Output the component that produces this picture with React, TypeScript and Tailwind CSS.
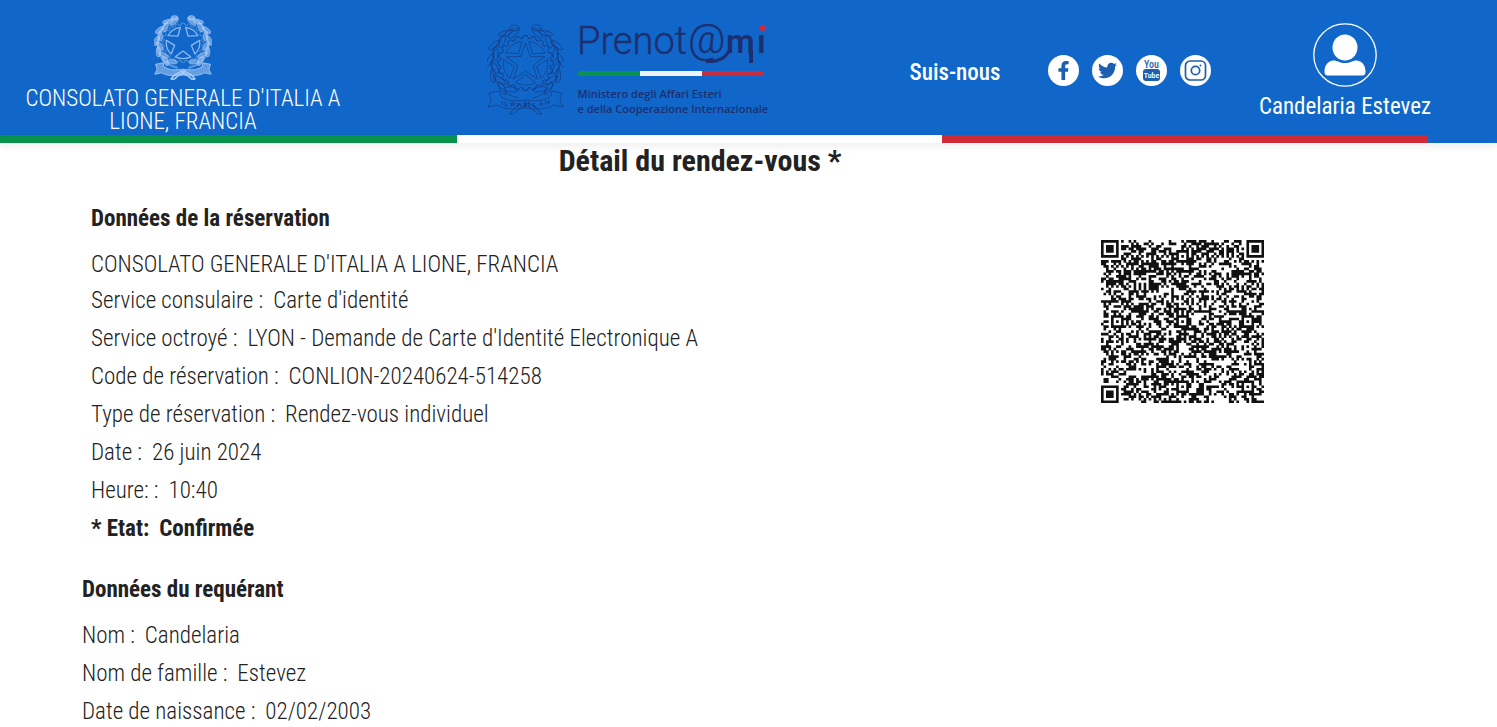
import { FaFacebookF, FaTwitter } from "react-icons/fa";

function polar(r: number, deg: number, cx = 38, cy = 39) {
  const a = (deg * Math.PI) / 180;
  return `${(cx + r * Math.cos(a)).toFixed(2)} ${(cy + r * Math.sin(a)).toFixed(2)}`;
}

const tips = [-90, -18, 54, 126, 198];
const starPoints = tips.map((t) => `${polar(20, t)} ${polar(8, t + 36)}`).join(" ");
const wedges = tips.map(
  (t) => `M${polar(22, t + 9)}A22 22 0 0 1 ${polar(22, t + 63)}L${polar(11.5, t + 36)}Z`
);
const gear =
  Array.from({ length: 20 }, (_, i) => {
    const a = i * 18 - 4;
    return `${i === 0 ? "M" : "L"}${polar(27.5, a)}L${polar(27.5, a + 8)}L${polar(25, a + 10)}L${polar(25, a + 16)}`;
  }).join("") + "Z";
const leafAngles = [118, 131, 144, 157, 170, 183, 196, 209, 222, 235, 248];

function Emblem({ light = false, className }: { light?: boolean; className: string }) {
  const line = light ? "#a9cbf5" : "#16377f";
  const leaf = light ? "#b7d3f7" : "none";
  return (
    <svg viewBox="0 0 76 91" preserveAspectRatio="none" className={className} fill="none" stroke={line} strokeWidth={light ? 1.1 : 0.65} strokeLinejoin="round" aria-hidden="true">
      <path d={gear} strokeOpacity={light ? 0.5 : 1} strokeWidth={light ? 1 : 0.9} />
      {wedges.map((d) => (
        <path key={d} d={d} strokeWidth={light ? 1.8 : 0.65} strokeOpacity={light ? 0.8 : 1} />
      ))}
      {!light && <polygon points={starPoints} />}
      {[1, -1].map((side) => (
        <g key={side} transform={side === -1 ? "translate(76 0) scale(-1 1)" : undefined}>
          <path d="M31 74C10 69 2 52 6 33C8 20 15 9 26 4" strokeWidth={light ? 3 : 0.65} strokeOpacity={light ? 0.5 : 1} />
          {leafAngles.map((a, i) => {
            const [x, y] = polar(31 + (i % 2) * 4, a, 38, 38).split(" ").map(Number);
            return (
              <ellipse key={a} cx={x} cy={y} rx="7" ry={light ? 3 : 2.4} fill={leaf} fillOpacity="0.5" strokeOpacity={light ? 0.6 : 1} transform={`rotate(${a + 90 + (i % 2 ? 22 : -20)} ${x} ${y})`} />
            );
          })}
          <ellipse cx="27" cy="4" rx="4.5" ry="3" fill={leaf} fillOpacity="0.5" />
          <path d="M2 69L12 67L13 72C20 78 29 77 38 76V84C27 86 16 85 10 81L1 83L4 76Z" fill={leaf} fillOpacity="0.5" />
          <path d="M22 90L27 84L34 80M26 90L33 84L42 78M22 90H26" strokeWidth={light ? 2.2 : 0.65} />
        </g>
      ))}
      {!light && (
        <path d="M15 77v4M18 78v4l3-1M24 78.500v4M24 79h3v2h-3M30 79v4l2-4 2 4M37 79v4M40 79h3M41.500 79v4M46 79v4h3M52 82l1.500-4 1.500 4M58 81v-4l3 3v-4" strokeWidth="0.8" />
      )}
    </svg>
  );
}

function Wordmark() {
  return (
    <svg viewBox="0 0 190 42" className="h-[42px] w-[190px] overflow-visible" role="img" aria-label="Prenot@mi">
      <g fill="#1d2f6f" fontFamily="Roboto, sans-serif">
        <text x="-1" y="30" fontSize="38" fontWeight="300" stroke="#1d2f6f" strokeWidth="0.4">Prenot</text>
        <text x="110" y="29" fontSize="41" fontWeight="300" stroke="#1d2f6f" strokeWidth="0.4">@</text>
        <text x="148" y="29" fontSize="33" fontWeight="600">m</text>
        <text x="179" y="29" fontSize="33" fontWeight="600">ı</text>
      </g>
      <path d="M128 37.500C139 38 147 35 151 27" fill="none" stroke="#1d2f6f" strokeWidth="3" />
      <rect x="171" y="26" width="4" height="13" fill="#1d2f6f" />
      <circle cx="184.500" cy="4" r="3" fill="#d0283a" />
    </svg>
  );
}

function YouTubeMark() {
  return (
    <svg viewBox="0 0 31 31" className="size-[31px]" aria-hidden="true">
      <text x="15.500" y="13" textAnchor="middle" fontFamily="'Roboto Condensed', sans-serif" fontSize="10" fontWeight="500" fill="#1d5fae">You</text>
      <rect x="7" y="14" width="17" height="12" rx="3" fill="#1d5fae" />
      <text x="15.500" y="23" textAnchor="middle" fontFamily="'Roboto Condensed', sans-serif" fontSize="8" fontWeight="500" fill="#fff">Tube</text>
    </svg>
  );
}

function InstagramMark() {
  return (
    <svg viewBox="0 0 31 31" className="size-[31px]" fill="none" stroke="#1d5fae" strokeWidth="1.700" aria-hidden="true">
      <rect x="5.500" y="6" width="20" height="19" rx="4.500" />
      <circle cx="15.500" cy="15.500" r="4.200" />
      <circle cx="20.500" cy="10.500" r="1" fill="#1d5fae" stroke="none" />
    </svg>
  );
}

const SIZE = 65;

function buildCode() {
  const grid: number[][] = Array.from({ length: SIZE }, () => Array(SIZE).fill(0));
  let seed = 514258;
  for (let y = 0; y < SIZE; y++) {
    for (let x = 0; x < SIZE; x++) {
      seed = (seed + 0x6d2b79f5) | 0;
      let t = Math.imul(seed ^ (seed >>> 15), 1 | seed);
      t = (t + Math.imul(t ^ (t >>> 7), 61 | t)) ^ t;
      grid[y][x] = ((t ^ (t >>> 14)) >>> 0) % 2;
    }
  }
  for (let i = 0; i < SIZE; i++) {
    grid[6][i] = grid[i][6] = i % 2 === 0 ? 1 : 0;
  }
  const square = (cx: number, cy: number, outer: number, rings: number[]) => {
    for (let dy = -outer; dy <= outer; dy++) {
      for (let dx = -outer; dx <= outer; dx++) {
        const x = cx + dx;
        const y = cy + dy;
        if (x < 0 || y < 0 || x >= SIZE || y >= SIZE) continue;
        grid[y][x] = rings[Math.max(Math.abs(dx), Math.abs(dy))];
      }
    }
  };
  for (const [x, y] of [[3, 3], [61, 3], [3, 61]]) square(x, y, 4, [1, 1, 0, 1, 0]);
  for (const [x, y] of [[32, 6], [6, 32], [32, 32], [58, 32], [32, 58], [58, 58]]) square(x, y, 2, [1, 0, 1]);
  let d = "";
  grid.forEach((row, y) =>
    row.forEach((on, x) => {
      if (on) d += `M${x} ${y}h1.050v1.050h-1.050z`;
    })
  );
  return d;
}

const codePath = buildCode();

const bookingRows = [
  ["Service consulaire :", "Carte d'identité"],
  ["Service octroyé :", "LYON - Demande de Carte d'Identité Electronique A"],
  ["Code de réservation :", "CONLION-20240624-514258"],
  ["Type de réservation :", "Rendez-vous individuel"],
  ["Date :", "26 juin 2024"],
  ["Heure: :", "10:40"],
];

const applicantRows = [
  ["Nom :", "Candelaria"],
  ["Nom de famille :", "Estevez"],
  ["Date de naissance :", "02/02/2003"],
];

function Row({ label, value, strong = false }: { label: string; value: string; strong?: boolean }) {
  return (
    <div className={strong ? "flex gap-2.5 font-bold" : "flex gap-2.5"}>
      <dt>{label}</dt>
      <dd>{value}</dd>
    </div>
  );
}

const badge = "flex size-[31px] items-center justify-center rounded-full bg-white text-[#1d5fae]";

export default function App() {
  return (
    <div className="bg-white font-['Roboto_Condensed','Roboto',sans-serif] text-[23px] leading-7 font-light text-[#222]">
      <header className="bg-[#1067c9] text-white">
        <div className="grid h-[135px] grid-cols-[366fr_522fr_345fr_224fr_40fr]">
          <div className="flex flex-col items-center pt-[15px] text-center">
            <Emblem light className="h-[65px] w-[58px]" />
            <p className="mt-[7px] px-6 leading-[23px]">CONSOLATO GENERALE D'ITALIA A LIONE, FRANCIA</p>
          </div>
          <div className="flex items-start justify-center gap-[14px] pt-6">
            <Emblem className="h-[91px] w-[77px]" />
            <div>
              <Wordmark />
              <div className="mt-[5px] flex h-[5px] w-[187px] overflow-hidden rounded-sm">
                <span className="flex-1 bg-[#0a9150]" />
                <span className="flex-1 bg-[#eef3ff]" />
                <span className="flex-1 bg-[#cc2b3b]" />
              </div>
              <p className="mt-[10px] w-[187px] font-['Open_Sans',sans-serif] text-[11px] leading-[15px] font-semibold whitespace-nowrap text-[#1d2f6f]">
                Ministero degli Affari Esteri
                <br />e della Cooperazione Internazionale
              </p>
            </div>
          </div>
          <nav aria-label="Suis-nous" className="flex items-start justify-center pt-[55px]">
            <span className="mt-1 mr-12 text-[23px] font-medium whitespace-nowrap">Suis-nous</span>
            <div className="flex gap-[13px]">
              <a href="#facebook" aria-label="Facebook" className={badge}><FaFacebookF size={19} /></a>
              <a href="#twitter" aria-label="Twitter" className={badge}><FaTwitter size={19} /></a>
              <a href="#youtube" aria-label="YouTube" className={badge}><YouTubeMark /></a>
              <a href="#instagram" aria-label="Instagram" className={badge}><InstagramMark /></a>
            </div>
          </nav>
          <a href="#profil" className="flex flex-col items-center pt-[23px] whitespace-nowrap">
            <svg viewBox="0 0 64 64" className="size-16" aria-hidden="true">
              <circle cx="32" cy="32" r="31.200" fill="none" stroke="#fff" strokeWidth="1.300" />
              <ellipse cx="32" cy="24.500" rx="12.500" ry="13" fill="#fff" />
              <path d="M20 37.500C24 37 26 40 32 40C38 40 40 37 44 37.500C49.500 38 52.500 43 52.500 48.500C52.500 51.500 51.500 52.500 48.500 52.500H15.500C12.500 52.500 11.500 51.500 11.500 48.500C11.500 43 14.500 38 20 37.500Z" fill="#fff" />
            </svg>
            <span className="mt-1.5 font-normal">Candelaria Estevez</span>
          </a>
        </div>
        <div className="grid h-2 grid-cols-[457fr_485fr_486fr_69fr] shadow-[0_3px_8px_rgba(0,0,0,0.08)]">
          <span className="bg-[#06924a]" />
          <span className="bg-white" />
          <span className="bg-[#cc2b37]" />
          <span className="bg-[#1067c9]" />
        </div>
      </header>

      <main className="pl-[82px]">
        <h1 className="mr-[179px] py-1 text-center text-[30px] leading-7 font-bold">Détail du rendez-vous *</h1>
        <div className="flex items-start">
          <section className="w-[71.400%] pt-[26px] pl-[9px]">
            <h2 className="font-bold">Données de la réservation</h2>
            <p className="mt-[18px]">CONSOLATO GENERALE D'ITALIA A LIONE, FRANCIA</p>
            <dl className="mt-2 flex flex-col gap-2.5">
              {bookingRows.map(([label, value]) => (
                <Row key={label} label={label} value={value} />
              ))}
              <Row label="* Etat:" value="Confirmée" strong />
            </dl>
          </section>
          <svg viewBox="0 0 65 65" className="mt-[61px] ml-[9px] size-[163px] shrink-0" role="img" aria-label="Code QR du rendez-vous">
            <path d={codePath} fill="#111" />
          </svg>
        </div>
        <section className="mt-[33px]">
          <h2 className="font-bold">Données du requérant</h2>
          <dl className="mt-[18px] flex flex-col gap-2.5">
            {applicantRows.map(([label, value]) => (
              <Row key={label} label={label} value={value} />
            ))}
          </dl>
        </section>
      </main>
    </div>
  );
}
